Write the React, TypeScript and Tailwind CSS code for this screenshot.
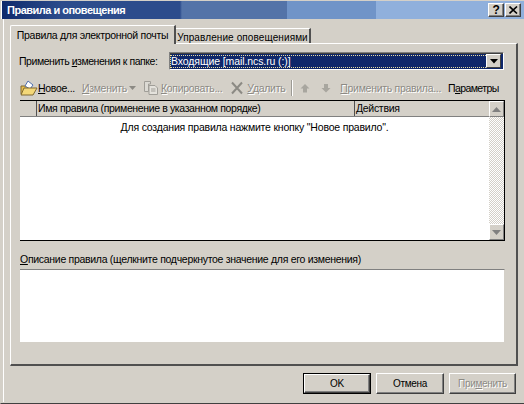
import React from "react";

const U = ({ children }: { children: React.ReactNode }) => <span className="underline underline-offset-1">{children}</span>;

const Dis = ({ children, className = "" }: { children: React.ReactNode; className?: string }) => (
  <span className={"text-[#8c8a84] [text-shadow:1px_1px_0_#ffffff] whitespace-nowrap " + className}>{children}</span>
);

const Caption = ({ children }: { children: React.ReactNode }) => (
  <button className="w-[16px] h-[14px] bg-[#d4d0c8] border border-t-white border-l-white border-r-[#404040] border-b-[#404040] shadow-[inset_-1px_-1px_0_#808080] flex items-center justify-center text-black">
    {children}
  </button>
);

const Btn = ({ children, def = false, className = "" }: { children: React.ReactNode; def?: boolean; className?: string }) => (
  <div className={(def ? "border border-black " : "") + "h-[21px] flex " + className}>
    <div className="flex-1 flex items-center justify-center border border-t-white border-l-white border-r-[#404040] border-b-[#404040] shadow-[inset_-1px_-1px_0_#808080] text-[10px]">
      {children}
    </div>
  </div>
);

const Sc = ({ up }: { up: boolean }) => (
  <div className="h-[16px] bg-[#d4d0c8] border border-t-white border-l-white border-r-[#808080] border-b-[#808080] flex items-center justify-center">
    <svg width="9" height="5" viewBox="0 0 9 5">
      <path d={up ? "M4.5 0 L9 5 H0 Z" : "M0 0 H9 L4.5 5 Z"} fill="#808080" />
    </svg>
  </div>
);

export default function App() {
  return (
    <div className="w-[524px] h-[404px] bg-[#d4d0c8] flex flex-col pl-[2px] pr-[1px] pt-[1px] pb-[1px] border-b border-b-[#404040] border-l border-l-[#d4d0c8] text-black text-[10.5px] tracking-[-0.3px] leading-[13px] font-['Liberation_Sans',Arial,sans-serif] overflow-hidden">
      <div className="h-[18px] shrink-0 flex items-center justify-between -ml-[2px] -mr-[1px] pr-[3px] pl-[5px] border-l border-l-white bg-[linear-gradient(90deg,#0f2a6c_0,#2c4c8c_60px,#2c4c8c_178px,#5373a8_180px,#5373a8_285px,#7094c8_285px,#7094c8_374px,#90b0dc_374px,#90b0dc_100%)]">
        <span className="text-white font-bold text-[11px] tracking-[-0.5px] whitespace-nowrap">Правила и оповещения</span>
        <div className="flex gap-[1px]">
          <Caption><span className="font-bold text-[12px] leading-none">?</span></Caption>
          <Caption>
            <svg width="9" height="8" viewBox="0 0 9 8"><path d="M0.5 0.5 L8 7.5 M8 0.5 L0.5 7.5" stroke="#000" strokeWidth="1.6" /></svg>
          </Caption>
        </div>
      </div>

      <div className="flex-1 flex flex-col border-l border-l-white pl-[6px] pr-[6px]">
        <div className="flex items-end h-[25px] shrink-0 relative z-10 -mb-[1px]">
          <div className="h-[19px] w-[166px] bg-[#d4d0c8] border-l border-t border-l-white border-t-white rounded-tl-[2px] border-r-2 border-r-[#505050] flex items-center justify-center pt-[1px] whitespace-nowrap">
            Правила для электронной почты
          </div>
          <div className="h-[15px] w-[135px] border-t border-t-white border-r-2 border-r-[#505050] flex items-center justify-center pt-[2px] whitespace-nowrap text-[10px] tracking-[0.1px] mb-[1px]">
            Управление оповещениями
          </div>
        </div>

        <div className="w-[508px] h-[323px] shrink-0 flex flex-col border-t border-t-white border-l border-l-white border-r-2 border-r-[#505050] border-b-2 border-b-[#505050] pl-[9px] pr-[12px]">
          <div className="flex items-center justify-between h-[18px] mt-[8px] shrink-0">
            <span className="whitespace-nowrap tracking-[-0.45px] -ml-[1px] pt-[1px]">Применить <U>и</U>зменения к папке:</span>
            <div className="w-[335px] h-[18px] border-t border-l border-t-[#808080] border-l-[#808080] border-r border-b border-r-white border-b-white bg-[#0f276a] shadow-[inset_1px_1px_0_#404040]">
              <div className="w-full h-full flex items-center pr-[2px]">
                <div className="flex-1 h-[13px] border-y border-l border-dotted border-[#e8dca0] text-white text-[10.5px] tracking-[-0.1px] leading-[11px] whitespace-nowrap">
                  Входящие [mail.ncs.ru (:)]
                </div>
                <div className="w-[15px] h-[14px] bg-[#d4d0c8] border border-t-white border-l-white border-r-[#404040] border-b-[#404040] flex items-center justify-center">
                  <svg width="8" height="5" viewBox="0 0 8 5"><path d="M0 0 H8 L4 4.5 Z" fill="#000" /></svg>
                </div>
              </div>
            </div>
          </div>

          <div className="flex items-center h-[22px] mt-[7px] shrink-0 whitespace-nowrap">
            <svg width="18" height="17" viewBox="0 0 18 17" className="shrink-0">
              <path d="M1 6 H6 L7 4 H11 V14 H1 Z" fill="#e8c050" stroke="#806830" strokeWidth="1" />
              <path d="M8 1 L13 5 L10 9 L5 6 Z" fill="#ffffff" stroke="#5070b0" strokeWidth="1" />
              <path d="M1 15 L4 8 H17 L13 15 Z" fill="#f4d878" stroke="#806830" strokeWidth="1" />
            </svg>
            <span><U>Н</U>овое...</span>
            <Dis className="ml-[7px]"><U>И</U>зменить</Dis>
            <svg width="7" height="4" viewBox="0 0 7 4" className="ml-[2px] shrink-0"><path d="M0 0 H7 L3.5 4 Z" fill="#8c8a84" /></svg>
            <svg width="16" height="16" viewBox="0 0 16 16" className="ml-[7px] shrink-0">
              <path d="M1.5 1.5 H7.5 V4 H5.5 V11.5 H1.5 Z" fill="#dcdad4" stroke="#a09e98" />
              <path d="M6 5.5 H12 L14.5 8 V14.5 H6 Z" fill="#e4e2dc" stroke="#a09e98" />
              <path d="M8 9 H12.5 M8 11 H12.5" stroke="#a09e98" />
            </svg>
            <Dis className="ml-[2px]"><U>К</U>опировать...</Dis>
            <svg width="14" height="14" viewBox="0 0 14 14" className="ml-[8px] shrink-0">
              <path d="M2 1.5 L12 12.5 M12 1.5 L2 12.5" stroke="#8c8a84" strokeWidth="2" />
            </svg>
            <Dis className="ml-[3px]"><U>У</U>далить</Dis>
            <div className="w-[2px] h-[16px] ml-[6px] shrink-0 border-l border-l-[#9c9a94] border-r border-r-white" />
            <svg width="10" height="10" viewBox="0 0 10 10" className="ml-[7px] shrink-0"><path d="M5 1 L9.5 5.5 H7 V9.5 H3 V5.5 H0.5 Z" fill="#a8a69f" /></svg>
            <svg width="10" height="10" viewBox="0 0 10 10" className="ml-[11px] shrink-0"><path d="M5 9.5 L9.5 5 H7 V1 H3 V5 H0.5 Z" fill="#a8a69f" /></svg>
            <Dis className="ml-[9px]"><U>П</U>рименить правила...</Dis>
            <span className="ml-[7px] tracking-[-0.6px]">П<U>а</U>раметры</span>
          </div>

          <div className="h-[141px] mt-[1px] shrink-0 flex border-t border-t-black border-r border-r-black border-b border-b-black bg-white w-[485px]">
            <div className="flex-1 flex flex-col min-w-0">
              <div className="h-[16px] shrink-0 flex bg-[#d4d0c8] border-b border-b-[#808080]">
                <div className="w-[17px] border-r border-r-[#505050]" />
                <div className="w-[318px] pl-[1px] border-r border-r-[#505050] whitespace-nowrap tracking-[-0.37px] leading-[15px]">Имя правила (применение в указанном порядке)</div>
                <div className="flex-1 pl-[1px] leading-[15px]">Действия</div>
              </div>
              <div className="text-center pt-[4px] whitespace-nowrap tracking-[-0.2px]">
                Для создания правила нажмите кнопку "Новое правило".
              </div>
            </div>
            <div className="w-[15px] flex flex-col justify-between bg-[repeating-conic-gradient(#d4d0c8_0_25%,#ffffff_0_50%)] bg-[length:2px_2px]">
              <Sc up />
              <Sc up={false} />
            </div>
          </div>

          <div className="mt-[11px] pb-[3px] leading-[14px] whitespace-nowrap shrink-0"><U>О</U>писание правила (щелкните подчеркнутое значение для его изменения)</div>
          <div className="h-[74px] w-[485px] shrink-0 bg-white border-t border-t-[#808080] border-r border-b border-r-[#d4d0c8] border-b-[#d4d0c8]" />
        </div>

        <div className="flex gap-[5px] justify-end mt-[7px] pr-[1px] shrink-0">
          <Btn def className="w-[68px]"><span>OK</span></Btn>
          <Btn className="w-[68px]"><span>Отмена</span></Btn>
          <Btn className="w-[67px]">
            <Dis>При<U>м</U>енить</Dis>
          </Btn>
        </div>
      </div>
    </div>
  );
}
